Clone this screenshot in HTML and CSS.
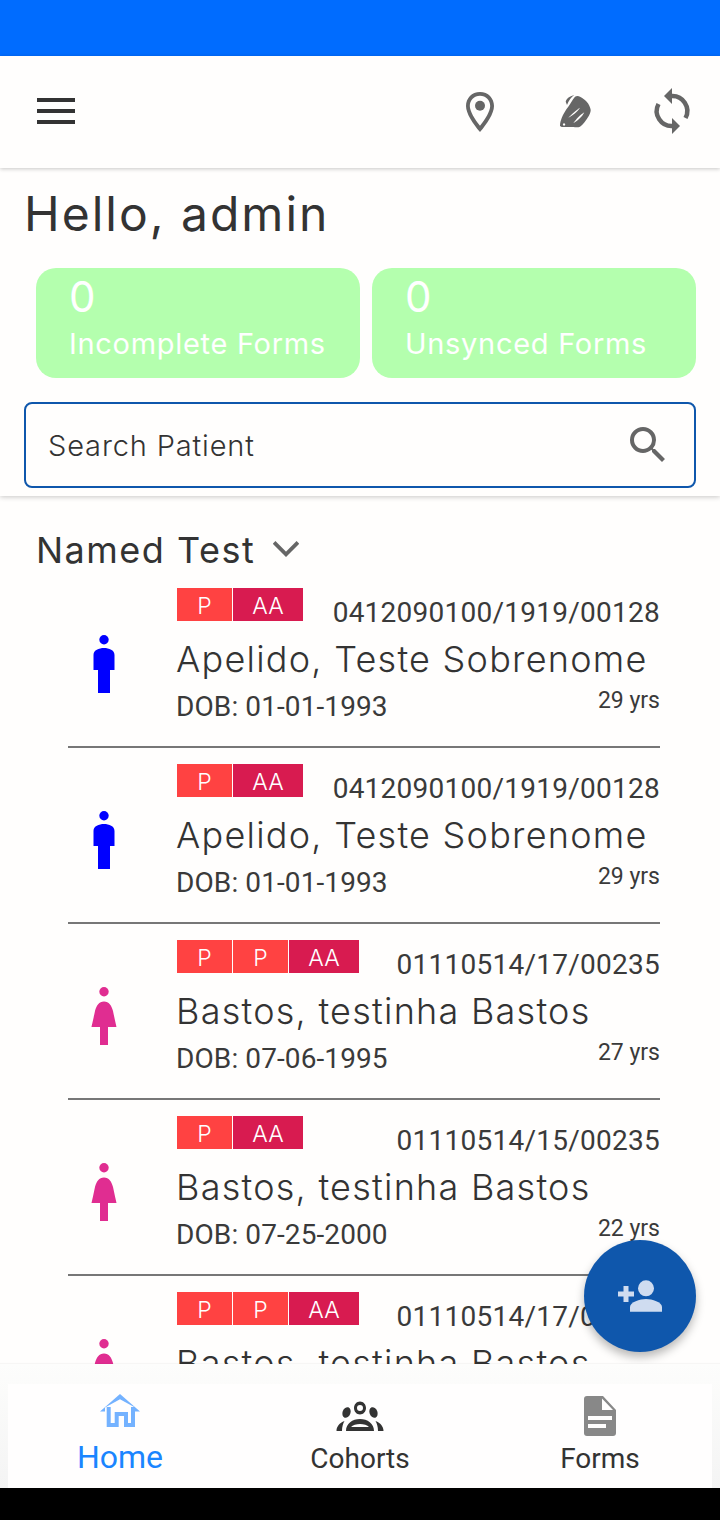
FILE: index.html
```html
<!DOCTYPE html>
<html lang="en">
<head>
<meta charset="utf-8">
<title>Home</title>
<link rel="stylesheet" href="styles.css">
</head>
<body>
<div class="phone">
  <div class="status"></div>
  <header class="toolbar">
    <svg class="menu" viewBox="0 0 38 26"><path d="M0 0h38v4H0zM0 11h38v4H0zM0 22h38v4H0z"/></svg>
    <div class="tool-icons">
      <svg class="tool" viewBox="0 0 48 48"><path fill-rule="evenodd" d="M24 5C15.800 5 10 11.200 10 19c0 7.500 7 18 14 26 7-8 14-18.500 14-26 0-7.800-5.800-14-14-14zm0 3.800c5.900 0 10.200 4.500 10.200 10.200 0 5.200-5 13.300-10.200 19.800C18.800 32.300 13.800 24.200 13.800 19 13.800 13.300 18.100 8.800 24 8.800z"/><circle cx="24" cy="18.700" r="5"/></svg>
      <svg class="tool" viewBox="0 0 48 48"><path d="M13.700 14.700C14.500 12 16 10 22.300 8c-3 2-5.500 5.500-7.300 10z"/><path fill-rule="evenodd" d="M8 39c0-3 .7-5.500 1.700-8 1.500-4 4-8 6.600-11.300 2-3 4-6.500 6.700-10 1.500-.8 3.500-.8 5 0 2.500 1.300 4.800 3 6.700 5 2 2.300 3.700 5.500 4 8.300 0 2.500-1.200 4.700-2.400 6.700-2.300 3.500-5 7.500-8.300 10-2 1-4.500 .6-6.700 .3H9.700z M12 36.300a1.200 1.200 0 1 0 .1 0z M28 20.700c-3 1.800-9.500 7.700-11.700 10 3.500-1.500 10-6.500 11.700-10z M32.300 25.300c-3.500 2-8.500 7-11 11 3.700-2 9.300-7 11-11z"/></svg>
      <svg class="tool" viewBox="0 0 48 48"><path d="M24 1v16l-8-8z"/><path d="M24 31v16l8-8z"/><path class="sync-arc" d="M23 9A15 15 0 0 1 37.500 31"/><path class="sync-arc" d="M25 39A15 15 0 0 1 10.500 17"/></svg>
    </div>
  </header>
  <section class="summary">
    <h1 class="hello">Hello, admin</h1>
    <div class="cards">
      <div class="card"><div class="card-num">0</div><div class="card-label">Incomplete Forms</div></div>
      <div class="card"><div class="card-num">0</div><div class="card-label">Unsynced Forms</div></div>
    </div>
    <div class="search">
      <span class="search-text">Search Patient</span>
      <svg class="search-icon" viewBox="0 0 24 24"><path d="M15.500 14h-.79l-.28-.27A6.470 6.470 0 0 0 16 9.500 6.500 6.500 0 1 0 9.500 16c1.610 0 3.090-.59 4.230-1.570l.27.28v.79l5 4.990L20.490 19l-4.990-5zm-6 0C7.010 14 5 11.990 5 9.500S7.010 5 9.500 5 14 7.010 14 9.500 11.990 14 9.500 14z"/></svg>
    </div>
  </section>
  <main class="content">
    <div class="section-title"><span>Named Test</span>
      <svg class="chev" viewBox="0 0 24 24"><path d="M1 5l11 11L23 5" fill="none" stroke-width="3.500"/></svg>
    </div>
    <ul class="patients">
      <li class="patient">
        <div class="avatar"><svg class="person male" viewBox="0 0 22 58"><circle cx="11" cy="4.700" r="4.700"/><path d="M11 13c5 0 10.500 2 10.500 7v15H17v23H5V35H.500V20c0-5 5.500-7 10.500-7z"/></svg></div>
        <div class="info">
          <div class="row-top"><div class="tags"><span class="tag p">P</span><span class="tag aa">AA</span></div><span class="code">0412090100/1919/00128</span></div>
          <div class="name">Apelido, Teste Sobrenome</div>
          <div class="row-bottom"><span class="dob">DOB: 01-01-1993</span><span class="age">29 yrs</span></div>
        </div>
      </li>
      <li class="patient">
        <div class="avatar"><svg class="person male" viewBox="0 0 22 58"><circle cx="11" cy="4.700" r="4.700"/><path d="M11 13c5 0 10.500 2 10.500 7v15H17v23H5V35H.500V20c0-5 5.500-7 10.500-7z"/></svg></div>
        <div class="info">
          <div class="row-top"><div class="tags"><span class="tag p">P</span><span class="tag aa">AA</span></div><span class="code">0412090100/1919/00128</span></div>
          <div class="name">Apelido, Teste Sobrenome</div>
          <div class="row-bottom"><span class="dob">DOB: 01-01-1993</span><span class="age">29 yrs</span></div>
        </div>
      </li>
      <li class="patient">
        <div class="avatar"><svg class="person female" viewBox="0 0 26 58"><circle cx="13" cy="4.700" r="4.700"/><path d="M13 14.500c5 0 7.500 4 9 9.500 1 5 3.500 16 3.500 16H17v18H9V40H.500s2.500-11 3.500-16c1.500-5.500 4-9.500 9-9.500z"/></svg></div>
        <div class="info">
          <div class="row-top"><div class="tags"><span class="tag p">P</span><span class="tag p">P</span><span class="tag aa">AA</span></div><span class="code">01110514/17/00235</span></div>
          <div class="name">Bastos, testinha Bastos</div>
          <div class="row-bottom"><span class="dob">DOB: 07-06-1995</span><span class="age">27 yrs</span></div>
        </div>
      </li>
      <li class="patient">
        <div class="avatar"><svg class="person female" viewBox="0 0 26 58"><circle cx="13" cy="4.700" r="4.700"/><path d="M13 14.500c5 0 7.500 4 9 9.500 1 5 3.500 16 3.500 16H17v18H9V40H.500s2.500-11 3.500-16c1.500-5.500 4-9.500 9-9.500z"/></svg></div>
        <div class="info">
          <div class="row-top"><div class="tags"><span class="tag p">P</span><span class="tag aa">AA</span></div><span class="code">01110514/15/00235</span></div>
          <div class="name">Bastos, testinha Bastos</div>
          <div class="row-bottom"><span class="dob">DOB: 07-25-2000</span><span class="age">22 yrs</span></div>
        </div>
      </li>
      <li class="patient">
        <div class="avatar"><svg class="person female" viewBox="0 0 26 58"><circle cx="13" cy="4.700" r="4.700"/><path d="M13 14.500c5 0 7.500 4 9 9.500 1 5 3.500 16 3.500 16H17v18H9V40H.500s2.500-11 3.500-16c1.500-5.500 4-9.500 9-9.500z"/></svg></div>
        <div class="info">
          <div class="row-top"><div class="tags"><span class="tag p">P</span><span class="tag p">P</span><span class="tag aa">AA</span></div><span class="code">01110514/17/00235</span></div>
          <div class="name">Bastos, testinha Bastos</div>
        </div>
      </li>
    </ul>
    <button class="fab" type="button" aria-label="Add patient">
      <svg viewBox="0 0 48 48"><path d="M7.500 14h5v5.500H18v5h-5.500V30h-5v-5.500H2v-5h5.500z"/><circle cx="30" cy="16.300" r="8"/><path d="M14 39.700V35c0-5 10-8 16-8s16 3 16 8v4.700z"/></svg>
    </button>
  </main>
  <nav class="tabs">
    <div class="tab-bar">
      <div class="tab active">
        <svg class="tab-icon home" viewBox="0 0 40 33"><path d="M0 17.500 20 0l20 17.500h-5v-4L20 5.300 5 13.500v4z"/><path class="home-line" d="M8.700 13V31h8V20H26V31h7V13"/></svg>
        <span>Home</span>
      </div>
      <div class="tab">
        <svg class="tab-icon cohort" viewBox="0 0 48 30"><path fill-rule="evenodd" d="M24 .500c3.300 0 6 2.900 6 6.500s-2.700 6.500-6 6.500-6-2.900-6-6.500S20.700.500 24 .500zm0 3.500a3 3 0 1 0 0 6 3 3 0 0 0 0-6z"/><ellipse cx="10.500" cy="11.500" rx="4" ry="5.500" transform="rotate(20 10.500 11.500)"/><ellipse cx="37.500" cy="11.500" rx="4" ry="5.500" transform="rotate(-20 37.500 11.500)"/><path fill-rule="evenodd" d="M10 30c0-7.500 6.500-12 14-12s14 4.500 14 12zM15 26h18c-1.500-2-5.500-3-9-3s-7.500 1-9 3z"/><path d="M.500 30c0-4.500 3-8 8-10-1.500 2.500-2.500 6-2.500 10zM47.500 30c0-4.500-3-8-8-10 1.500 2.500 2.500 6 2.500 10z"/></svg>
        <span>Cohorts</span>
      </div>
      <div class="tab">
        <svg class="tab-icon doc" viewBox="0 0 32 40"><path fill-rule="evenodd" d="M3 0h16l13 14v23a3 3 0 0 1-3 3H3a3 3 0 0 1-3-3V3a3 3 0 0 1 3-3zM18 2.500V14h11zM4 20v4h24v-4zM4 28v4h18v-4z"/></svg>
        <span>Forms</span>
      </div>
    </div>
  </nav>
  <div class="navbar"></div>
</div>
</body>
</html>
```
FILE: styles.css
```css
* { box-sizing: border-box; }
html, body { margin: 0; padding: 0; }
body { width: 720px; height: 1520px; overflow: hidden; background: #fffefd; font-family: "Inter", "Liberation Sans", sans-serif; color: #333; }
.phone { width: 720px; height: 1520px; display: flex; flex-direction: column; position: relative; }
.status { height: 56px; background: #006cff; flex: none; }
.toolbar { height: 112px; flex: none; display: flex; align-items: center; justify-content: space-between; padding: 0 24px 0 37px; background: #fffefd; box-shadow: 0 1px 4px rgba(0,0,0,.22); position: relative; z-index: 3; }
.menu { width: 38px; height: 26px; margin-top: -2px; fill: #333; }
.tool-icons { display: flex; gap: 48px; margin-top: -2px; }
.tool { width: 48px; height: 48px; fill: #666; display: block; }
.sync-arc { fill: none; stroke: #666; stroke-width: 4.500; }
.summary { height: 328px; flex: none; padding: 19px 24px 8px; background: #fffefd; box-shadow: 0 1px 5px rgba(0,0,0,.22); position: relative; z-index: 2; }
.hello { margin: 0; font-size: 48px; line-height: 54px; font-weight: 400; color: #333; letter-spacing: 2px; }
.cards { display: flex; gap: 12px; margin: 27px 0 0 12px; }
.card { width: 324px; height: 110px; border-radius: 20px; background: #b4ffae; color: #fff; padding: 6px 0 6px 33px; }
.card-num { font-size: 42px; line-height: 46px; font-weight: 400; }
.card-label { font-size: 29px; line-height: 36px; font-weight: 400; letter-spacing: .7px; margin-top: 6px; white-space: nowrap; }
.search { margin-top: 24px; height: 86px; border: 2px solid #0f57ac; border-radius: 8px; display: flex; align-items: center; justify-content: space-between; padding: 0 22px; }
.search-text { font-size: 29px; font-weight: 300; letter-spacing: .85px; color: #333; margin-top: 1px; }
.search-icon { width: 48px; height: 48px; fill: #666; }
.content { flex: 1; min-height: 0; position: relative; }
.section-title { display: flex; align-items: center; gap: 18px; padding: 16px 0 0 36px; height: 92px; font-size: 36px; line-height: 44px; letter-spacing: 1.500px; }
.chev { width: 26px; height: 26px; stroke: #666; }
.patients { list-style: none; margin: 0; padding: 0 60px 0 68px; height: 776px; overflow: hidden; }
.patient { height: 160px; margin-bottom: 16px; display: flex; border-bottom: 2px solid #777; }
.patient:last-child { border-bottom: 0; }
.avatar { width: 109px; flex: none; display: flex; justify-content: center; align-items: flex-start; padding: 47px 37px 0 0; }
.person { height: 58px; display: block; }
.male { width: 22px; fill: #0000ff; }
.female { width: 26px; fill: #e02d91; }
.info { flex: 1; min-width: 0; }
.row-top { display: flex; justify-content: space-between; align-items: flex-end; height: 42px; }
.tags { display: flex; gap: 1px; align-self: flex-start; }
.tag { width: 55px; height: 33px; color: #fff; font-size: 23px; line-height: 36px; text-align: center; font-weight: 300; }
.tag.p { background: #ff4242; }
.tag.aa { width: 70px; background: #d81b50; }
.code { font-family: "Roboto", sans-serif; font-size: 28px; line-height: 34px; letter-spacing: .25px; color: #3a3a3a; }
.name { font-size: 36px; line-height: 50px; font-weight: 300; letter-spacing: 1.250px; color: #333; margin: 4px 0 0 -1px; }
.row-bottom { display: flex; justify-content: space-between; font-family: "Roboto", sans-serif; color: #3a3a3a; }
.dob { font-size: 28px; line-height: 36px; margin: 5px 0 0 -1px; letter-spacing: .1px; }
.age { font-size: 23px; line-height: 30px; margin-top: 2px; }
.fab { position: absolute; right: 24px; bottom: 12px; width: 112px; height: 112px; border: 0; border-radius: 50%; background: #0f57ac; box-shadow: 0 5px 10px rgba(0,0,0,.28); padding: 32px; display: block; }
.fab svg { width: 48px; height: 48px; display: block; fill: #cfdcf0; }
.tabs { height: 124px; flex: none; background: linear-gradient(#fdfdfc, #f4f4f4); padding: 20px 8px 0; position: relative; z-index: 2; box-shadow: 0 -1px 1px rgba(0,0,0,.03); }
.tab-bar { height: 104px; background: #fffefe; display: grid; grid-template-columns: 224px 256px 224px; }
.tab { display: flex; flex-direction: column; align-items: center; justify-content: flex-end; padding-bottom: 13px; font-family: "Roboto", sans-serif; font-size: 28px; line-height: 32px; color: #333; }
.tab-icon { display: block; }
.home { width: 40px; height: 33px; fill: #74b2ff; margin-bottom: 14px; }
.home-line { fill: none; stroke: #74b2ff; stroke-width: 4; }
.cohort { width: 48px; height: 30px; fill: #333; margin-bottom: 12px; }
.doc { width: 32px; height: 40px; fill: #888; margin-bottom: 7px; }
.tab.active { color: #1a85ff; font-size: 32px; padding-bottom: 15px; }
.navbar { height: 32px; flex: none; background: #000; position: relative; z-index: 3; }
```
